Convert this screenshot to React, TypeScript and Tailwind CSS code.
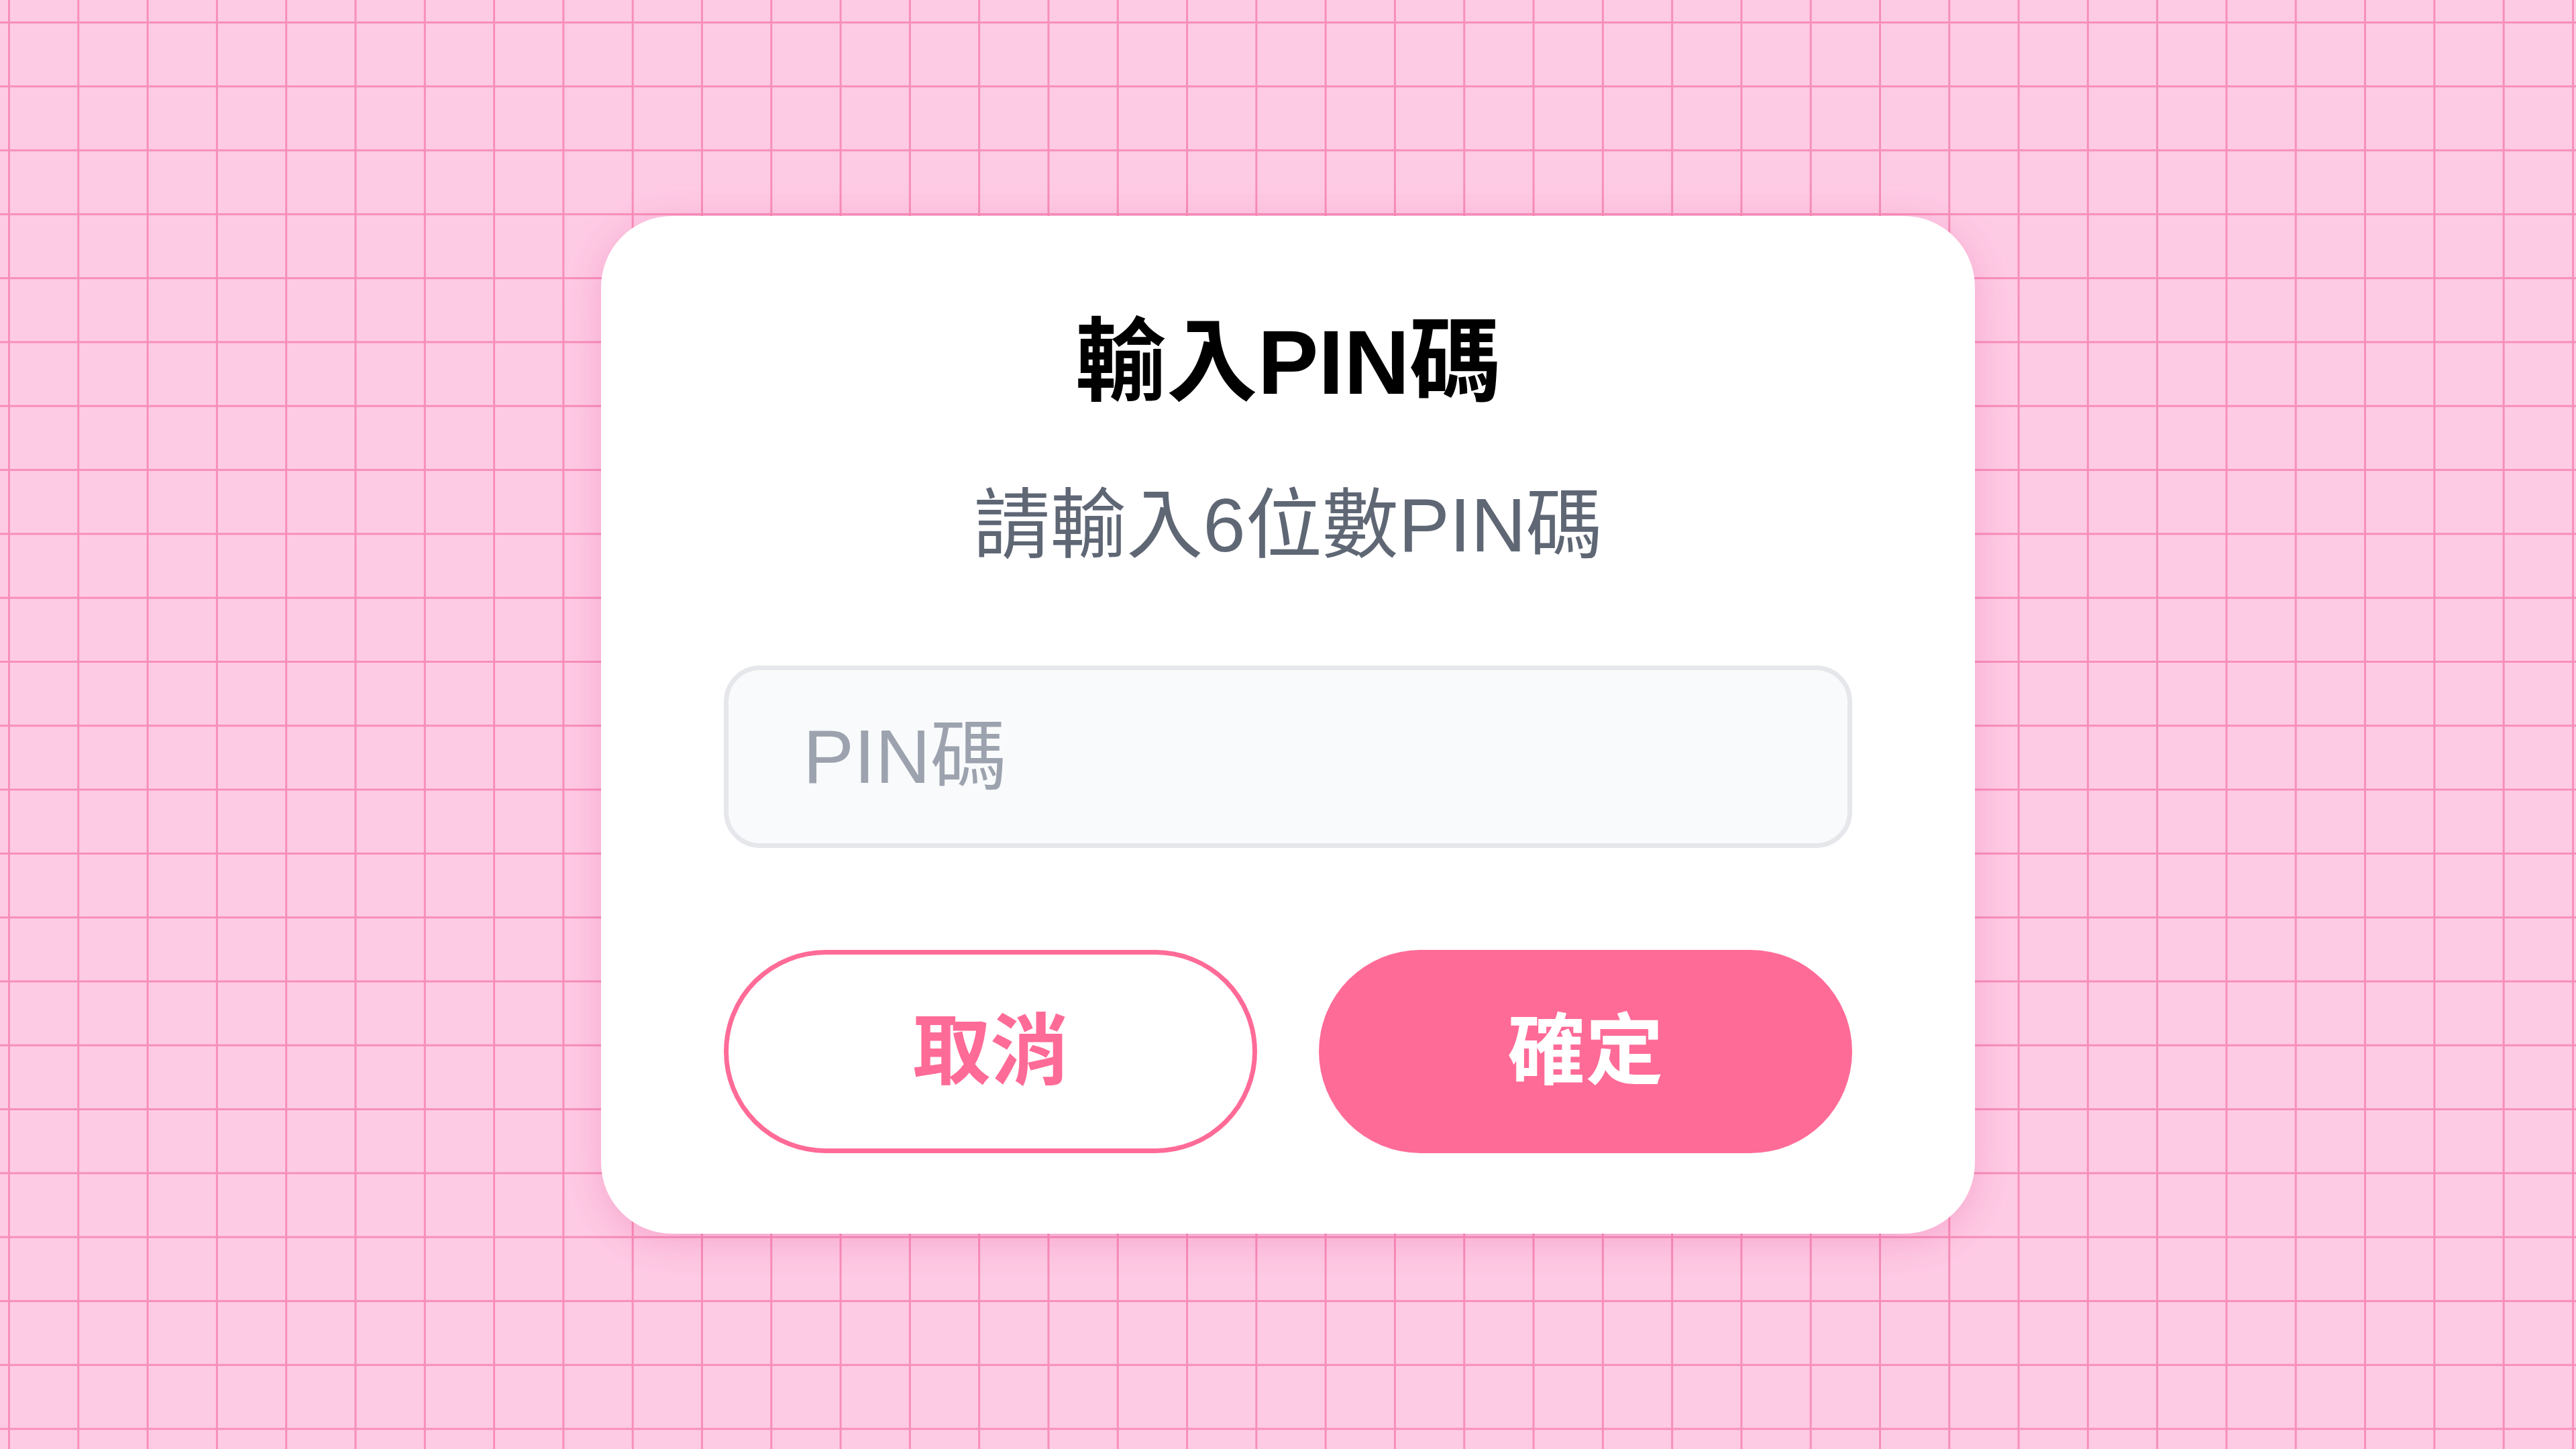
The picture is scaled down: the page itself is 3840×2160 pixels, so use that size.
import React, { useState } from 'react';

function App() {
  const [pin, setPin] = useState('');

  return (
    <div className="min-h-screen w-full flex items-center justify-center bg-[#fecbe5] bg-[linear-gradient(to_right,#f78fb9_3px,transparent_3px),linear-gradient(to_bottom,#f78fb9_3px,transparent_3px)] bg-[size:103.3px_95.3px] bg-[position:12px_32px] font-['Liberation_Sans','Noto_Sans_CJK_TC',sans-serif]">
      {/* PIN dialog */}
      <div className="w-[2048px] bg-white rounded-[106px] px-[183px] pt-[133px] pb-[120px] shadow-[0_12px_60px_rgba(219,39,119,0.22)] flex flex-col">
        <h1 className="text-center text-[136px] leading-[170px] font-bold text-black">
          輸入PIN碼
        </h1>
        <p className="mt-[72px] text-center text-[114px] leading-[171px] text-[#5f6775]">
          請輸入6位數PIN碼
        </p>

        <input
          type="password"
          inputMode="numeric"
          maxLength={6}
          value={pin}
          onChange={(e) => setPin(e.target.value)}
          placeholder="PIN碼"
          className="mt-[124px] h-[272px] w-full rounded-[54px] border-[7px] border-[#e5e7eb] bg-[#f9fafb] px-[111px] text-[114px] text-gray-700 placeholder:text-[#9ca3af] outline-none"
        />

        <div className="mt-[152px] grid grid-cols-2 gap-[92px]">
          <button className="h-[303px] rounded-full border-[7px] border-[#ff6b97] bg-white text-[116px] font-bold text-[#ff6b97]">
            取消
          </button>
          <button className="h-[303px] rounded-full bg-[#ff6b97] text-[116px] font-bold text-white">
            確定
          </button>
        </div>
      </div>
    </div>
  );
}

export default App;
